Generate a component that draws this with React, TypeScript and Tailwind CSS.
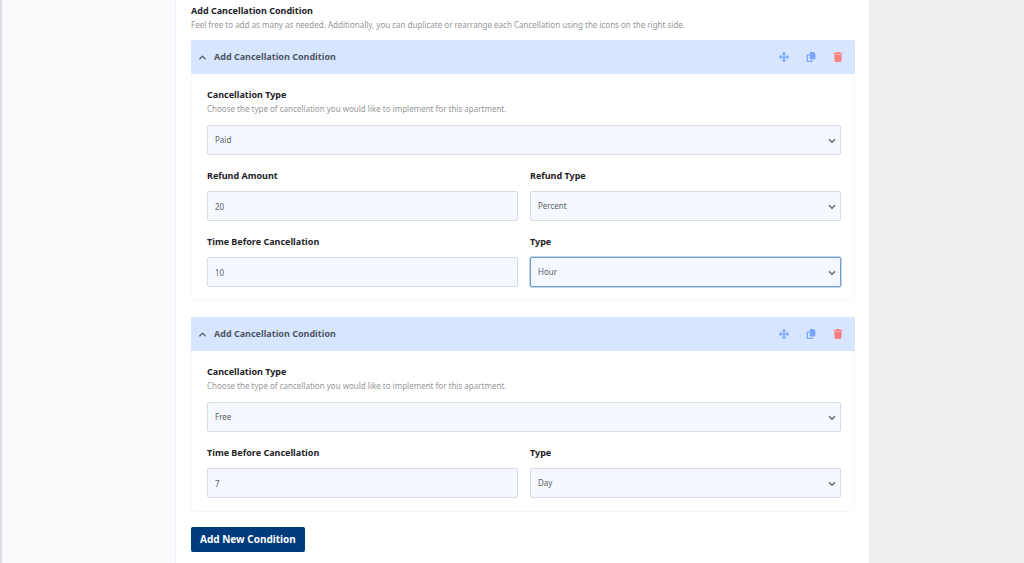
import React, { useState } from "react";
import { ChevronDown, ChevronUp } from "lucide-react";
import { FaArrowsUpDownLeftRight, FaCopy, FaTrash } from "react-icons/fa6";

type Condition = {
  id: number;
  type: string;
  refundAmount: string;
  refundType: string;
  time: string;
  unit: string;
};

const initialConditions: Condition[] = [
  {
    id: 1,
    type: "Paid",
    refundAmount: "20",
    refundType: "Percent",
    time: "10",
    unit: "Hour",
  },
  {
    id: 2,
    type: "Free",
    refundAmount: "",
    refundType: "Percent",
    time: "7",
    unit: "Day",
  },
];

const fieldClass =
  "block h-[30px] w-full appearance-none rounded-xs border bg-[#f5f8ff] px-[7px] text-[8px] text-[#5b6168] outline-none focus:border-[#4f8ac4]";

type FieldProps = {
  id: string;
  label: string;
  hint?: string;
  value: string;
  onChange: (value: string) => void;
};

const FieldLabel = ({ id, label, hint }: { id: string; label: string; hint?: string }) => (
  <div className={hint ? "mb-[10px]" : "mb-[7px]"}>
    <label htmlFor={id} className="block text-[9px] leading-4 font-bold text-[#1d2327]">
      {label}
    </label>
    {hint && <p className="text-[8px] leading-3 text-[#979797]">{hint}</p>}
  </div>
);

const TextField = ({ id, label, hint, value, onChange }: FieldProps) => (
  <div>
    <FieldLabel id={id} label={label} hint={hint} />
    <input
      id={id}
      type="text"
      value={value}
      onChange={(e) => onChange(e.target.value)}
      className={`${fieldClass} border-[#d9dce5]`}
    />
  </div>
);

const SelectField = ({
  id,
  label,
  hint,
  value,
  onChange,
  options,
  active,
}: FieldProps & { options: string[]; active?: boolean }) => (
  <div>
    <FieldLabel id={id} label={label} hint={hint} />
    <div className="relative">
      <select
        id={id}
        value={value}
        onChange={(e) => onChange(e.target.value)}
        className={`${fieldClass} ${active ? "border-[#6f9dcc] ring-1 ring-[#6f9dcc]/40" : "border-[#d9dce5]"}`}
      >
        {options.map((option) => (
          <option key={option}>{option}</option>
        ))}
      </select>
      <ChevronDown
        size={10}
        strokeWidth={4}
        className="pointer-events-none absolute top-[11px] right-1 text-[#6a7077]"
      />
    </div>
  </div>
);

const App = () => {
  const [conditions, setConditions] = useState(initialConditions);
  const [closed, setClosed] = useState<number[]>([]);

  const update = (id: number, changes: Partial<Condition>) => {
    setConditions(conditions.map((c) => (c.id === id ? { ...c, ...changes } : c)));
  };

  const nextId = () => Math.max(0, ...conditions.map((c) => c.id)) + 1;

  const duplicate = (condition: Condition) => {
    setConditions([...conditions, { ...condition, id: nextId() }]);
  };

  const remove = (id: number) => {
    setConditions(conditions.filter((c) => c.id !== id));
  };

  const toggle = (id: number) => {
    setClosed(closed.includes(id) ? closed.filter((c) => c !== id) : [...closed, id]);
  };

  return (
    <div className="flex min-h-screen bg-[#efefef] font-['Noto_Sans','Open_Sans',sans-serif]">
      <aside className="w-44 shrink-0 border-r border-l-2 border-r-[#eceef1] border-l-[#dcdee1] bg-[#f8fafc]" />

      <main className="min-w-0 flex-1 bg-white pt-[3px] pr-[14px] pb-[11px] pl-[15px]">
        <h2 className="text-[9px] leading-4 font-bold text-[#1d2327]">
          Add Cancellation Condition
        </h2>
        <p className="text-[8px] leading-3 text-[#979797]">
          Feel free to add as many as needed. Additionally, you can duplicate or
          rearrange each Cancellation using the icons on the right side.
        </p>

        <div className="mt-[9px] space-y-4">
          {conditions.map((condition) => {
            const isOpen = !closed.includes(condition.id);
            return (
              <section key={condition.id}>
                <div className="flex h-[34px] items-center rounded-t-xs bg-[#d8e5ff] pr-3 pl-[6px]">
                  <button
                    type="button"
                    aria-expanded={isOpen}
                    onClick={() => toggle(condition.id)}
                    className="flex flex-1 items-center gap-[6px] text-[9px] leading-4 font-bold text-[#4f5764]"
                  >
                    {isOpen ? (
                      <ChevronUp size={11} strokeWidth={3} />
                    ) : (
                      <ChevronDown size={11} strokeWidth={3} />
                    )}
                    Add Cancellation Condition
                  </button>
                  <div className="flex items-center gap-[17px] text-[#76a5ff]">
                    <button type="button" aria-label="Move" className="cursor-move">
                      <FaArrowsUpDownLeftRight size={10} />
                    </button>
                    <button
                      type="button"
                      aria-label="Duplicate"
                      onClick={() => duplicate(condition)}
                    >
                      <FaCopy size={10} />
                    </button>
                    <button
                      type="button"
                      aria-label="Delete"
                      onClick={() => remove(condition.id)}
                      className="text-[#fa7f7c]"
                    >
                      <FaTrash size={10} />
                    </button>
                  </div>
                </div>

                {isOpen && (
                  <div className="space-y-[13px] rounded-b border border-t-0 border-[#f8f8fa] py-[13px] pr-[13px] pl-[15px]">
                    <SelectField
                      id={`type-${condition.id}`}
                      label="Cancellation Type"
                      hint="Choose the type of cancellation you would like to implement for this apartment."
                      value={condition.type}
                      onChange={(type) => update(condition.id, { type })}
                      options={["Free", "Paid"]}
                    />
                    {/* Refund fields only apply to paid cancellations */}
                    {condition.type === "Paid" && (
                      <div className="grid grid-cols-2 gap-3">
                        <TextField
                          id={`refund-${condition.id}`}
                          label="Refund Amount"
                          value={condition.refundAmount}
                          onChange={(refundAmount) => update(condition.id, { refundAmount })}
                        />
                        <SelectField
                          id={`refund-type-${condition.id}`}
                          label="Refund Type"
                          value={condition.refundType}
                          onChange={(refundType) => update(condition.id, { refundType })}
                          options={["Percent", "Fixed"]}
                        />
                      </div>
                    )}
                    <div className="grid grid-cols-2 gap-3">
                      <TextField
                        id={`time-${condition.id}`}
                        label="Time Before Cancellation"
                        value={condition.time}
                        onChange={(time) => update(condition.id, { time })}
                      />
                      <SelectField
                        id={`unit-${condition.id}`}
                        label="Type"
                        value={condition.unit}
                        onChange={(unit) => update(condition.id, { unit })}
                        options={["Hour", "Day"]}
                        active={condition.id === 1}
                      />
                    </div>
                  </div>
                )}
              </section>
            );
          })}
        </div>

        <button
          type="button"
          onClick={() => duplicate({ ...initialConditions[1], time: "" })}
          className="mt-[15px] h-[25px] rounded-xs bg-[#003c7c] px-[9px] text-[10px] font-bold text-white"
        >
          Add New Condition
        </button>
      </main>

      <div className="w-[155px] shrink-0 border-l border-[#e8e8e8]" />
    </div>
  );
};

export default App;
